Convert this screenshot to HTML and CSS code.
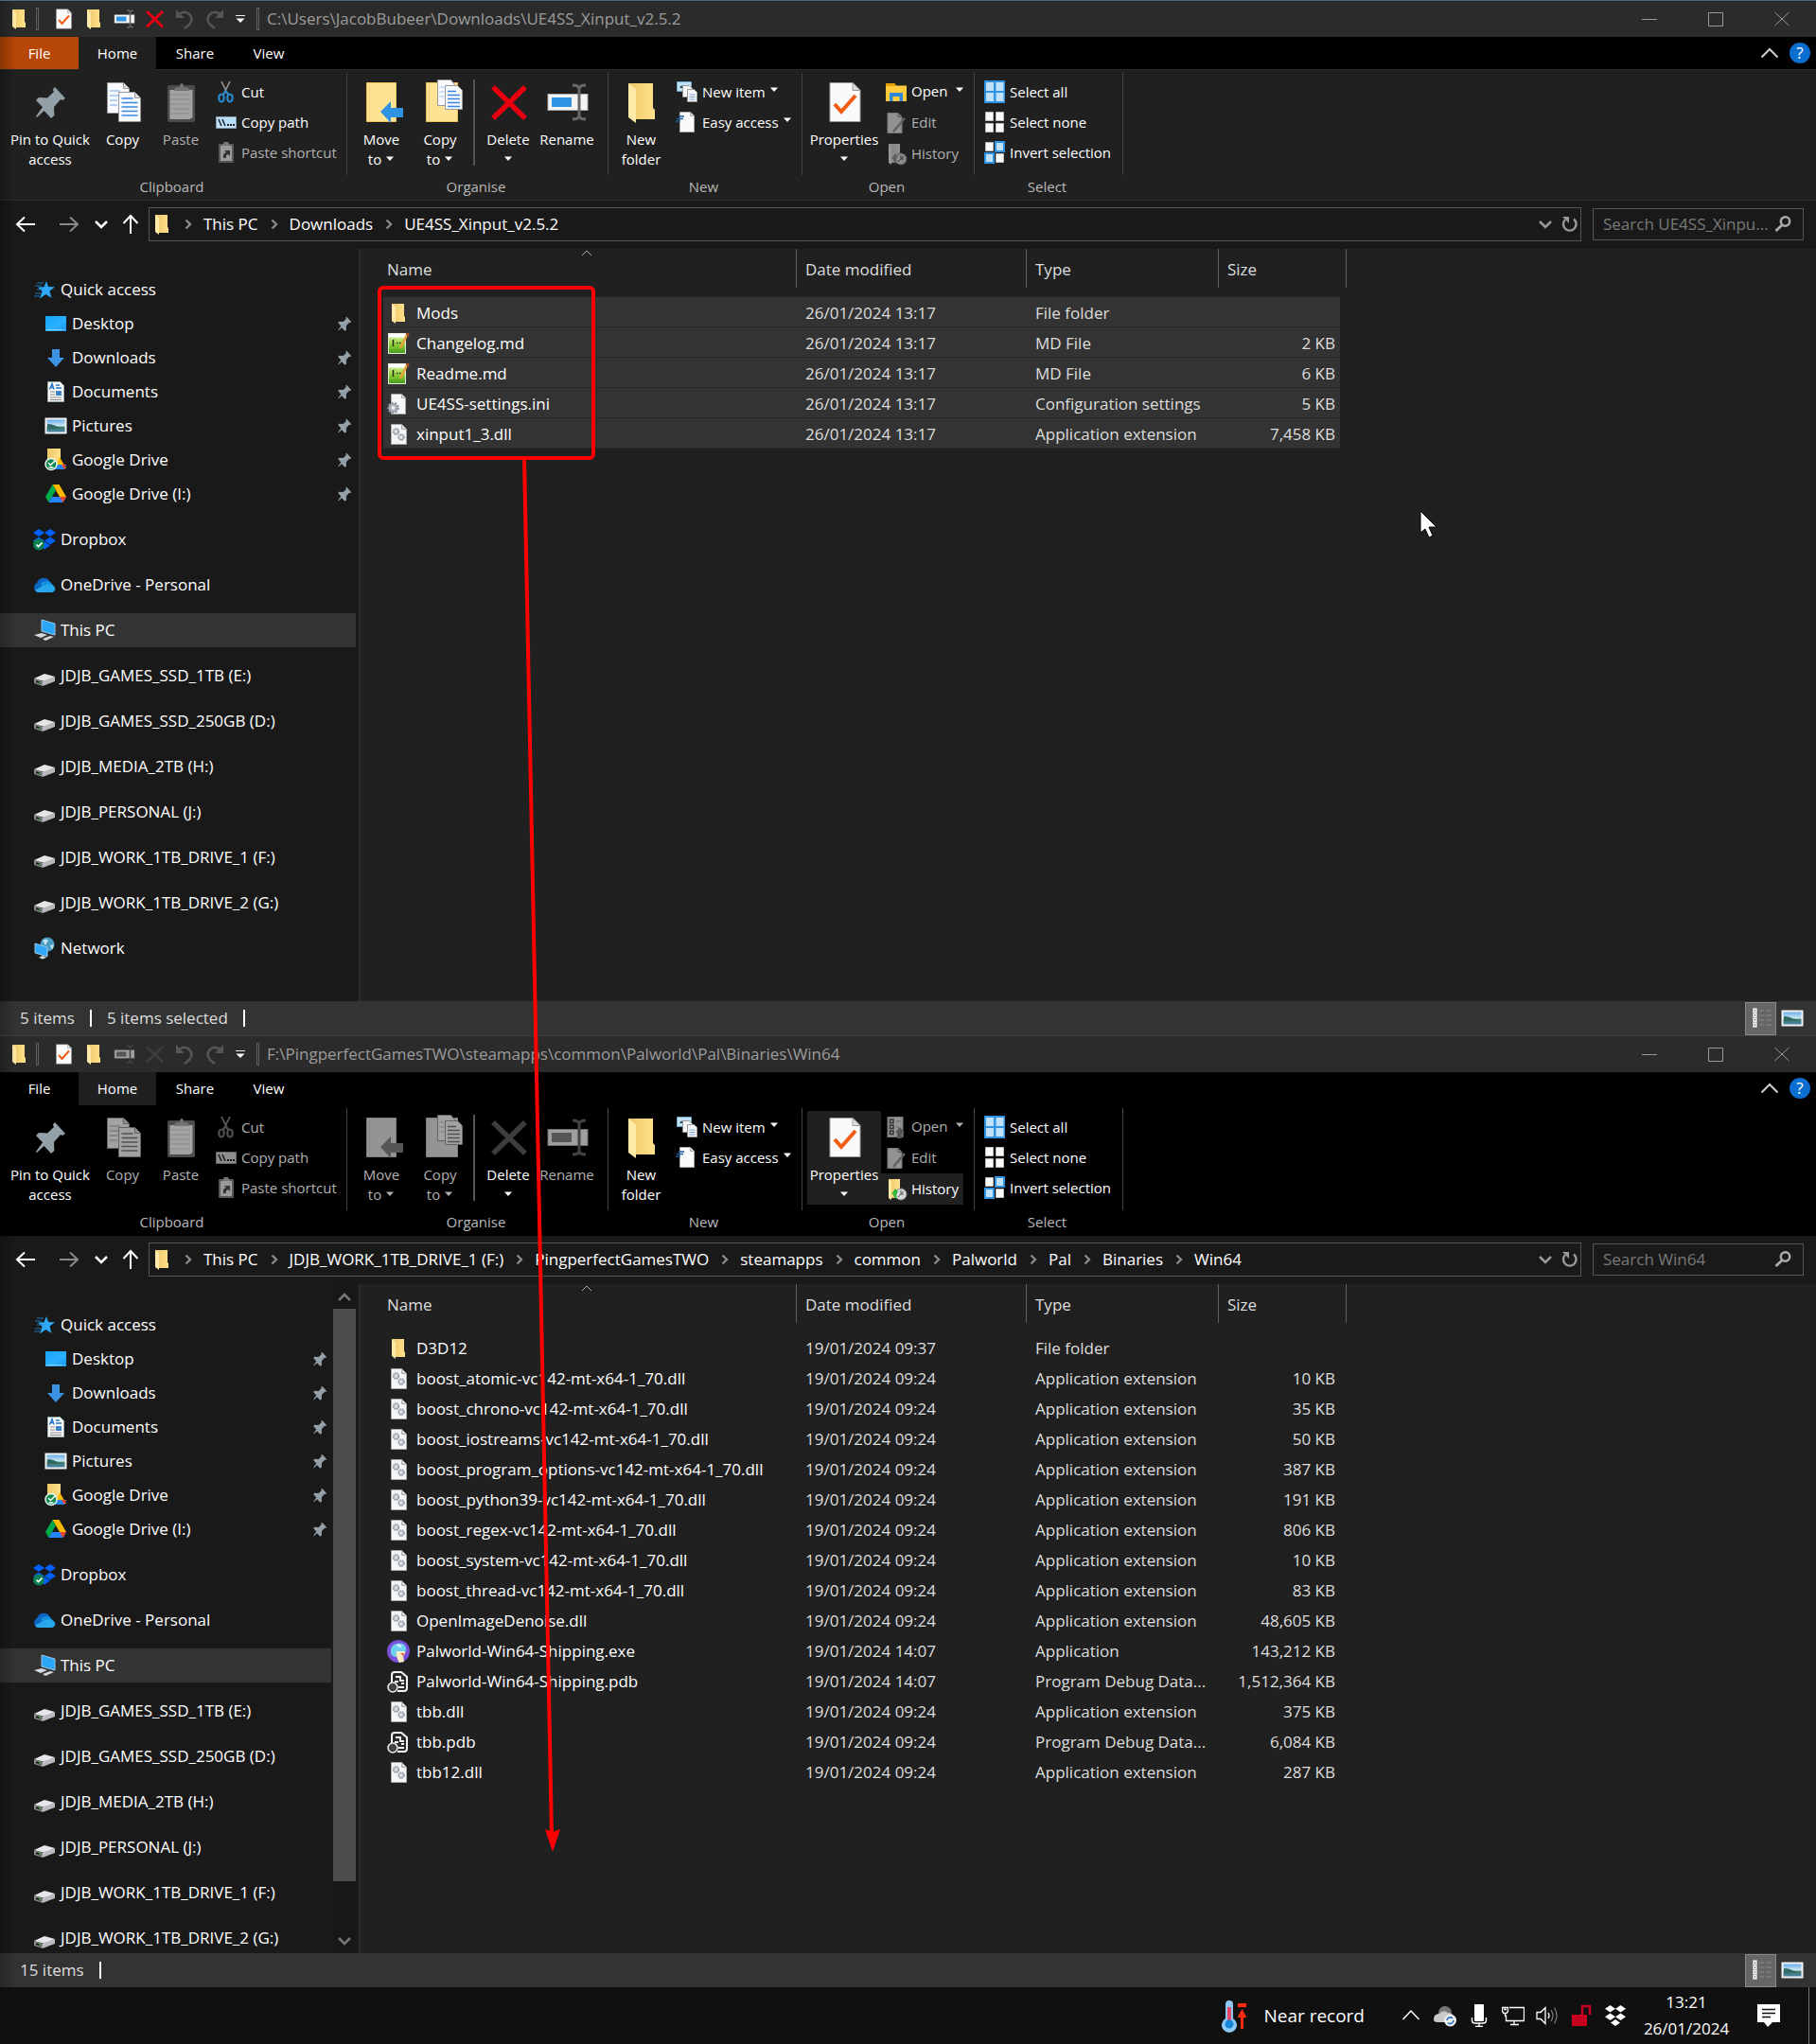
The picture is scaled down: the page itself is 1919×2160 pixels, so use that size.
FILE: index.html
```html
<!DOCTYPE html>
<html lang="en-GB">
<head>
<meta charset="utf-8">
<title>File Explorer</title>
<link rel="stylesheet" href="styles.css">
</head>
<body>
<svg class="sprite" aria-hidden="true">
  <defs>
    <linearGradient id="gFolder" x1="0" y1="0" x2="1" y2="0"><stop offset="0" stop-color="#edc866"/><stop offset="1" stop-color="#ffe08c"/></linearGradient>
    <linearGradient id="gSky" x1="0" y1="0" x2="0" y2="1"><stop offset="0" stop-color="#5aa5e6"/><stop offset=".5" stop-color="#cfe6f5"/><stop offset=".6" stop-color="#3f7a6a"/><stop offset="1" stop-color="#4a86b8"/></linearGradient>
    <linearGradient id="gBlue" x1="0" y1="0" x2="1" y2="1"><stop offset="0" stop-color="#14a5ff"/><stop offset=".6" stop-color="#2cb0ff"/><stop offset="1" stop-color="#1490ea"/></linearGradient>
    <linearGradient id="gGreen" x1="0" y1="0" x2="0" y2="1"><stop offset="0" stop-color="#e9f6c8"/><stop offset=".5" stop-color="#9bd63c"/><stop offset="1" stop-color="#3f9a1a"/></linearGradient>
  </defs>
  <symbol id="folder" viewBox="0 0 24 24"><path d="M5 2h13v13l1 1v5H8z" fill="url(#gFolder)"/><path d="M5 2l4 3v18l-4-3z" fill="#ffe9a6"/></symbol>
  <symbol id="props" viewBox="0 0 48 48"><path d="M9 3.500h24l8 8v33H9z" fill="#fafafa" stroke="#9a9a9a"/><path d="M33 3.500v8h8z" fill="#ddd" stroke="#9a9a9a"/><path d="M14 26l7 8 15-17" fill="none" stroke="#f25c12" stroke-width="4"/></symbol>
  <symbol id="rename" viewBox="0 0 48 48"><rect x="4" y="15.500" width="42" height="17" fill="#f4f4f4" stroke="#aaa"/><rect x="8" y="19" width="21" height="10" fill="#2f93e4"/><path d="M30 6q7 0 7 4v28q0 4-7 4M44 6q-7 0-7 4M44 42q-7 0-7-4" fill="none" stroke="#666" stroke-width="3"/></symbol>
  <symbol id="cross" viewBox="0 0 48 48"><path d="M8 8l34 33M42 8L8 41" stroke="#e8000e" stroke-width="5.500"/></symbol>
  <symbol id="undo" viewBox="0 0 24 24"><path d="M5 8q7-6 12-1t0 11l-5 4" fill="none" stroke="#555" stroke-width="2.500"/><path d="M3 2v9h9z" fill="#555"/></symbol>
  <symbol id="redo" viewBox="0 0 24 24"><path d="M19 8q-7-6-12-1t0 11l5 4" fill="none" stroke="#555" stroke-width="2.500"/><path d="M21 2v9h-9z" fill="#555"/></symbol>
  <symbol id="more" viewBox="0 0 12 12"><path d="M1 2.500h10" stroke="#eee"/><path d="M1.500 5.500h9L6 10z" fill="#fff"/></symbol>
  <symbol id="pin" viewBox="0 0 24 24"><path d="M14.500 4l5.500 6-1.500 1-1-.5-3.500 4 .2 4.500-1.700 1.500-3.700-4L5 20l-.6-.4 3.600-5L4.500 11 6 9.500l4.500.3L14 6.500l-.6-1.200z" fill="#94a0a8"/></symbol>
  <symbol id="copy" viewBox="0 0 48 48"><g stroke="#999" fill="#f8f9fc"><path d="M7.500 3.500h17l6 6v26h-23z"/><path d="M24.500 3.500v6h6" fill="#ddd"/></g><path d="M10 12h11M10 17h11M10 22h8M10 27h8" stroke="#9dc3ee" stroke-width="1.500"/><g stroke="#999" fill="#f8f9fc"><path d="M19.500 13.500h17l6 6v25h-23z"/><path d="M36.500 13.500v6h6" fill="#ddd"/></g><path d="M22.500 20h12M22.500 24.500h17M22.500 29h17M22.500 33.500h17M22.500 38h17" stroke="#3b86e0" stroke-width="1.500"/></symbol>
  <symbol id="paste" viewBox="0 0 48 48"><rect x="10" y="6" width="29" height="39" rx="2" fill="#4c4c4e"/><path d="M12.500 11h24v29l-3 2h-21z" fill="#a3a3a5"/><path d="M17 12q0-4 4-4h2q0-4 2-4t2 4h2q4 0 4 4z" fill="#737375"/><path d="M14 16h20M14 21h20M14 26h20M14 31h20M14 36h18" stroke="#858588"/></symbol>
  <symbol id="cut" viewBox="0 0 24 24"><path d="M7 1l7 14M16 1L9 15" stroke="#9a9a9a" stroke-width="1.600"/><g fill="none" stroke="#2b8bd0" stroke-width="2.200"><ellipse cx="7" cy="18.500" rx="2.700" ry="4"/><ellipse cx="16" cy="18.500" rx="2.700" ry="4"/><path d="M8.500 15l3-3.500 3 3.500"/></g></symbol>
  <symbol id="path" viewBox="0 0 24 24"><rect x="1.500" y="6.500" width="21" height="12" fill="#b9dffb" stroke="#8d9aa5"/><path d="M4 9l3 7M8 9l3 7" stroke="#222" stroke-width="1.500"/><path d="M13 15h2M16 15h2M19 15h2" stroke="#222" stroke-width="2"/></symbol>
  <symbol id="shortcut" viewBox="0 0 24 24"><rect x="4" y="3" width="16" height="20" rx="1" fill="#58585a"/><rect x="6" y="5" width="12" height="16" fill="#9a9a9c"/><path d="M8 5l2-4h4l2 4z" fill="#777"/><path d="M9 18q-1-5 3-6l-2-2h6v6l-2-2q-3 1-2 4z" fill="#333"/></symbol>
  <symbol id="moveto" viewBox="0 0 48 48"><path d="M8.500 3.500h31v41h-31z" fill="#ffe394" stroke="#e8c15a"/><path d="M11.500 6v37" stroke="#f0cd6e"/><path d="M23 34l11-11v7h13v10H34v6z" fill="#2f93e4"/></symbol>
  <symbol id="copyto" viewBox="0 0 48 48"><path d="M9.500 3.500h33v41h-33z" fill="#ffe394" stroke="#e8c15a"/><path d="M12.500 6v37" stroke="#f0cd6e"/><g stroke="#999" fill="#f8f9fc"><path d="M21.500.5h14l4 5v22h-18z"/><path d="M29.500 6.500h13l5 5v20h-18z"/></g><path d="M23.500 8h5M23.500 13h5M23.500 18h5" stroke="#9dc3ee"/><path d="M32 12.500h9M32 16.500h13M32 20.500h13M32 24.500h13M32 28.500h13" stroke="#3b86e0" stroke-width="1.500"/></symbol>
  <symbol id="newitem" viewBox="0 0 24 24"><path d="M1.500 1.500h15v10h-15z" fill="#bfe2f6" stroke="#6fa7c9"/><path d="M4 8q2-5 5 0z" fill="#345"/><g fill="#f6f6f8" stroke="#999"><path d="M7.500 5.500h7l3 3v9h-10z"/><path d="M12.500 9.500h7l3 3v10h-10z"/></g><path d="M14.500 15h6M14.500 17.500h6M14.500 20h6" stroke="#7b9fd8"/></symbol>
  <symbol id="easy" viewBox="0 0 24 24"><path d="M4.500 1.500h11l4 4v17h-15z" fill="#fafafa" stroke="#aaa"/><path d="M15.500 1.500v4h4" fill="#ddd" stroke="#aaa"/><path d="M3 6h6M1 8.500h7M0 11h5" stroke="#1c5c93" stroke-width="1.400"/></symbol>
  <symbol id="open" viewBox="0 0 24 24"><path d="M1 3h9l2 2.500h11V22H1z" fill="#ffcb3d"/><path d="M1 3h10v3H1z" fill="#e39c0a"/><path d="M5 22v-9h14v9h-3.500v-5h-7v5z" fill="#2f87dd"/></symbol>
  <symbol id="openfile" viewBox="0 0 24 24"><rect x="3" y="1.500" width="16" height="21" fill="#929292" stroke="#777"/><g fill="#999" stroke="#333" stroke-width="1.500"><rect x="5.500" y="4" width="3.500" height="3.500"/><rect x="5.500" y="10" width="3.500" height="3.500"/><rect x="5.500" y="16" width="3.500" height="3.500"/></g><path d="M12 6h5M12 12h3" stroke="#666"/><path d="M16 12l5 6h-3v6h-5v-6h-2z" fill="#555"/></symbol>
  <symbol id="edit" viewBox="0 0 24 24"><path d="M3 1.500h11l4 4v17H3z" fill="#929292" stroke="#777"/><path d="M14 1.500v4h4" fill="none" stroke="#555"/><path d="M21 7L9 21" stroke="#606060" stroke-width="2.500"/></symbol>
  <symbol id="history" viewBox="0 0 24 24"><path d="M4 1h12v20H4z" fill="url(#gFolder)"/><path d="M4 1l3 2v20l-3-2z" fill="#ffe9a6"/><circle cx="17" cy="17" r="6" fill="#d8d8d8" stroke="#888"/><path d="M17 13v4h3M14 20l6-6" stroke="#555" fill="none"/><path d="M7 17l4-6 3 3q-3 3-1 8-4-1-4-5z" fill="#2fb83a"/></symbol>
  <symbol id="selall" viewBox="0 0 24 24"><path d="M1 0h22v24H1z" fill="#2f93e4"/><path d="M3 2h8v9H3zM13.500 2h8v9h-8zM3 13h8v9H3zM13.500 13h8v9h-8z" fill="#bfe1fb"/></symbol>
  <symbol id="selnone" viewBox="0 0 24 24"><path d="M2.500 1.500h8v9h-8zM13.500 1.500h8v9h-8zM2.500 13.500h8v9h-8zM13.500 13.500h8v9h-8z" fill="#fafafa" stroke="#bbb"/></symbol>
  <symbol id="selinv" viewBox="0 0 24 24"><path d="M2.500 1.500h8v9h-8zM13.500 13.500h8v9h-8z" fill="#fafafa" stroke="#bbb"/><path d="M13 1h9v10h-9zM2 13h9v10H2z" fill="#bfe1fb" stroke="#2f93e4" stroke-width="2"/></symbol>
  <symbol id="caret" viewBox="0 0 10 6"><path d="M1 .5h8L5 5z" fill="currentColor"/></symbol>
  <symbol id="min" viewBox="0 0 16 16"><path d="M0 8.500h16" stroke="#999"/></symbol>
  <symbol id="max" viewBox="0 0 16 16"><path d="M.5 1.500h15v14H.5z" fill="none" stroke="#999"/></symbol>
  <symbol id="close" viewBox="0 0 16 16"><path d="M.5 1l15 14M15.500 1L.5 15" stroke="#999"/></symbol>
  <symbol id="up-thin" viewBox="0 0 20 12"><path d="M1.500 10.500L10 2l8.500 8.500" fill="none" stroke="currentColor" stroke-width="2"/></symbol>
  <symbol id="sort" viewBox="0 0 12 8"><path d="M1 7l5-5 5 5" fill="none" stroke="#aaa"/></symbol>
  <symbol id="left" viewBox="0 0 24 24"><path d="M12 4.500L4 12l8 7.500M4 12h19" fill="none" stroke="currentColor" stroke-width="2"/></symbol>
  <symbol id="right" viewBox="0 0 24 24"><path d="M12 4.500l8 7.500-8 7.500M20 12H1" fill="none" stroke="currentColor" stroke-width="2"/></symbol>
  <symbol id="up" viewBox="0 0 24 24"><path d="M4.500 11L12 3l7.500 8M12 3v19" fill="none" stroke="currentColor" stroke-width="2"/></symbol>
  <symbol id="down" viewBox="0 0 16 12"><path d="M2 3l6 6 6-6" fill="none" stroke="currentColor" stroke-width="2.500"/></symbol>
  <symbol id="chev" viewBox="0 0 12 12"><path d="M3.500 1.500L8 6l-4.500 4.500" fill="none" stroke="#8a8a8a" stroke-width="2.400"/></symbol>
  <symbol id="refresh" viewBox="0 0 20 20"><path d="M14 4.500a6.800 6.800 0 1 1-9 .5" fill="none" stroke="#999" stroke-width="2.400"/><path d="M2 2h7v7z" fill="#999"/></symbol>
  <symbol id="search" viewBox="0 0 20 20"><circle cx="12.500" cy="7" r="4.700" fill="none" stroke="#aaa" stroke-width="2.500"/><path d="M9.500 10.500L2.500 17" stroke="#aaa" stroke-width="3"/></symbol>
  <symbol id="star" viewBox="0 0 24 24"><path d="M14 3l2 6 7 .3-5.500 4.200 2 7.500L13.500 17 7 21.500l2.500-7.500L5 9.500l6.500-.3z" fill="#2ea8f5"/><path d="M4 5h7M2 8h7M4 12h6M2 16h6M1 19h6" stroke="#1b78bd" stroke-width="1.200"/></symbol>
  <symbol id="desktop" viewBox="0 0 24 24"><rect x="1" y="4" width="22" height="16" fill="url(#gBlue)"/><path d="M2 18.500h17M20 18.500h2" stroke="#7fd0ff"/></symbol>
  <symbol id="downloads" viewBox="0 0 24 24"><path d="M8 3h8v9h5l-9 10-9-10h5z" fill="#3c93e3"/></symbol>
  <symbol id="documents" viewBox="0 0 24 24"><path d="M3.500 1.500h13l4 4v17h-17z" fill="#fafafa" stroke="#9aa"/><path d="M5.500 9.500l2.500-6 2 6M6.500 7.500h3M12 5h4M12 8h6" stroke="#2176c7" stroke-width="1.400" fill="none"/><path d="M12 11h6v5h-6z" fill="#3c84c4"/><path d="M6 12h5M6 15h5M6 18h12M6 20.500h12" stroke="#888"/></symbol>
  <symbol id="pictures" viewBox="0 0 24 24"><rect x="1.500" y="4.500" width="21" height="15" fill="url(#gSky)" stroke="#f2f2f2" stroke-width="2"/><path d="M3 10q7 0 14 5H3z" fill="#2f6b62"/></symbol>
  <symbol id="drive-tri" viewBox="0 0 24 24"><path d="M8.500 2h7l7.500 13h-7z" fill="#ffba00"/><path d="M8.500 2L12 8 4.500 21 1 15z" fill="#00a94b"/><path d="M4.500 21L8 15h15l-3.500 6z" fill="#2684fc"/><path d="M16 15h7l-3.500 6z" fill="#ea4335"/></symbol>
  <symbol id="gdrive" viewBox="0 0 24 24"><path d="M3 0h14v15H3z" fill="url(#gFolder)"/><path d="M16 9l7 12H11z" fill="#ffba00"/><path d="M12 17h11l-2 5H11z" fill="#2684fc"/><path d="M18 17h5l-2 5z" fill="#ea4335"/><circle cx="7" cy="16.500" r="6" fill="#0f8a4d" stroke="#e8f5ee" stroke-width="1.500"/><path d="M4 15l2.500 2.500L11 13M4.500 20h5" fill="none" stroke="#fff" stroke-width="1.500"/></symbol>
  <symbol id="dropbox" viewBox="0 0 24 24"><path d="M6 1l6 4-6 4-6-4zM18 1l6 4-6 4-6-4zM6 9.500l6 4-6 4-6-4zM18 9.500l6 4-6 4-6-4zM12 14.500l6 4-6 4-6-4z" fill="#0061ff"/><circle cx="6" cy="17.500" r="6" fill="#0c8050"/><path d="M3.500 17.500l2 2 4-4" fill="none" stroke="#fff" stroke-width="1.600"/></symbol>
  <symbol id="onedrive" viewBox="0 0 24 24"><path d="M3.500 19a5 5 0 0 1 .5-9 7.500 7.500 0 0 1 14-1L12 18z" fill="#0a64c0"/><path d="M8 10q7-4 11 0l3 4-12 5z" fill="#1490df"/><path d="M2 17.500L11 13q8-4 11.500 1 2.500 4-2.500 6H5q-2 0-3-2.500z" fill="#28a8ea"/></symbol>
  <symbol id="pc" viewBox="0 0 24 24"><path d="M9 1l14 4v12L9 13z" fill="#2aa6f7" stroke="#9cc8e2"/><path d="M1 17l8-2 6 2-7 3zM10 21l8-3 4 1-9 4z" fill="#d5dade"/></symbol>
  <symbol id="disk" viewBox="0 0 24 24"><path d="M1 15l11-5 11 3-11 5z" fill="#e6e6e8"/><path d="M1 15l9 3v5l-9-3z" fill="#8b8b8e"/><path d="M10 18l13-5v5l-13 5z" fill="#b9b9bd"/><path d="M3 18l5 2" stroke="#222" stroke-width="2"/><path d="M6 19.500h1.500" stroke="#4c4" stroke-width="1.200"/></symbol>
  <symbol id="network" viewBox="0 0 24 24"><circle cx="15" cy="8" r="7.500" fill="#4c9bc4"/><path d="M10 4q4-3 6 0l-3 5zM18 9l4-1-2 6z" fill="#c2e2ef"/><path d="M2 7l13 4v10L2 17z" fill="#31a9f8" stroke="#9cc8e2"/><path d="M6 22l4-2 4 2-4 1.500z" fill="#ddd"/></symbol>
  <symbol id="md" viewBox="0 0 24 24"><rect x="1.500" y="1.500" width="18" height="21" fill="url(#gGreen)" stroke="#e6ecdc"/><path d="M2 3.500h17" stroke="#fff" stroke-width="4"/><path d="M6.500 8v7M10 11.500h1.500M13 11.500h1.500" stroke="#222" stroke-width="1.500"/><path d="M21.500 2L14 17" stroke="#e9a13c" stroke-width="2.500"/><path d="M22.500 1l-1 3" stroke="#b34b2a" stroke-width="2.500"/></symbol>
  <symbol id="ini" viewBox="0 0 24 24"><path d="M4.500 1.500h11l4 4v17h-15z" fill="#f5f6f8" stroke="#aaa"/><path d="M15.500 1.500v4h4" fill="#ddd" stroke="#aaa"/><circle cx="6.500" cy="16" r="5" fill="#aab2ba" stroke="#8d969e" stroke-width="2.500" stroke-dasharray="2 1.500"/><circle cx="6.500" cy="16" r="2" fill="#eee"/></symbol>
  <symbol id="dll" viewBox="0 0 24 24"><path d="M4.500 1.500h11l5 5v16h-16z" fill="#f5f6f8" stroke="#aaa"/><path d="M15.500 1.500v5h5" fill="#ddd" stroke="#aaa"/><g fill="#dfe3e6" stroke="#8b949c" stroke-width="1.800" stroke-dasharray="1.700 .6"><circle cx="9.500" cy="9" r="2.800"/><circle cx="15" cy="15" r="2.800"/></g></symbol>
  <symbol id="exe" viewBox="0 0 24 24"><circle cx="12" cy="12" r="12" fill="#7a50d8"/><path d="M4 15q-1-9 5-11 9-2 11 4v4h-8l-2 6q-4 0-6-3z" fill="#6fd0ee"/><path d="M10 12h9q1 3-2 5l1 6-5 1q-4-6-3-12z" fill="#f9ecc0"/><path d="M14 14h5l-2 3z" fill="#e06a5a"/><path d="M11 5l4 2" stroke="#c8f2ff" stroke-width="3"/></symbol>
  <symbol id="pdb" viewBox="0 0 24 24"><path d="M5 13V5q0-3 3-3h7l6 5v12q0 3-3 3h-7" fill="#2a2a2a" stroke="#f4f4f4" stroke-width="2"/><path d="M9 7h5v4h4M8 12h4M15 14h3M12 18h6" stroke="#f4f4f4" stroke-width="1.800" fill="none"/><circle cx="6" cy="18" r="5" fill="#444" stroke="#eee" stroke-width="1.500"/></symbol>
  <symbol id="details" viewBox="0 0 24 24"><path d="M3.500 1.500h4v5h-4zM3.500 6.500h4v5h-4zM3.500 11.500h4v5h-4zM3.500 16.500h4v5h-4z" fill="#fff" stroke="#bbb"/><path d="M5 4h1M5 9h1M5 14h1M5 19h1" stroke="#446" stroke-width="1.500"/><path d="M10 4h5M17 4h6M10 9h5M17 9h6M10 14h5M17 14h6M10 19h5M17 19h6" stroke="#8a8a8a"/></symbol>
</svg>

<main class="desk">
  <section class="window" aria-label="UE4SS_Xinput_v2.5.2">
    <header class="titlebar">
      <svg class="ic"><use href="#folder"/></svg><span class="bar"></span>
      <div class="qat">
        <button aria-label="Properties"><svg class="ic"><use href="#props"/></svg></button>
        <button aria-label="New folder"><svg class="ic"><use href="#folder"/></svg></button>
        <button aria-label="Rename"><svg class="ic"><use href="#rename"/></svg></button>
        <button aria-label="Delete"><svg class="ic"><use href="#cross"/></svg></button>
        <button aria-label="Undo"><svg class="ic"><use href="#undo"/></svg></button>
        <button aria-label="Redo"><svg class="ic"><use href="#redo"/></svg></button>
        <button class="more" aria-label="Customise"><svg class="ic"><use href="#more"/></svg></button>
      </div>
      <span class="bar"></span>
      <h1>C:\Users\JacobBubeer\Downloads\UE4SS_Xinput_v2.5.2</h1>
      <div class="controls"><button aria-label="Minimise"><svg><use href="#min"/></svg></button><button aria-label="Maximise"><svg><use href="#max"/></svg></button><button aria-label="Close"><svg><use href="#close"/></svg></button></div>
    </header>
    <nav class="tabs">
      <button class="tab file">File</button><button class="tab current">Home</button><button class="tab">Share</button><button class="tab view">View</button>
      <div class="help"><button aria-label="Collapse ribbon"><svg class="collapse"><use href="#up-thin"/></svg></button><button class="round" aria-label="Help">?</button></div>
    </nav>
    <div class="ribbon">
      <div class="group clipboard">
        <div class="tools">
          <button class="big pinbtn"><svg><use href="#pin"/></svg><span>Pin to Quick<br>access</span></button>
          <button class="big copybtn"><svg><use href="#copy"/></svg><span>Copy</span></button>
          <button class="big off pastebtn"><svg><use href="#paste"/></svg><span>Paste</span></button>
          <div class="stack">
            <button class="small"><svg class="ic"><use href="#cut"/></svg>Cut</button>
            <button class="small"><svg class="ic"><use href="#path"/></svg>Copy path</button>
            <button class="small off"><svg class="ic"><use href="#shortcut"/></svg>Paste shortcut</button>
          </div>
        </div>
        <div class="caption">Clipboard</div>
      </div>
      <div class="group organise">
        <div class="tools">
          <button class="big"><svg><use href="#moveto"/></svg><span>Move<br>to <svg class="caret"><use href="#caret"/></svg></span></button>
          <button class="big"><svg><use href="#copyto"/></svg><span>Copy<br>to <svg class="caret"><use href="#caret"/></svg></span></button>
          <span class="rule"></span>
          <button class="big"><svg><use href="#cross"/></svg><span>Delete<br><svg class="caret"><use href="#caret"/></svg></span></button>
          <button class="big"><svg><use href="#rename"/></svg><span>Rename</span></button>
        </div>
        <div class="caption">Organise</div>
      </div>
      <div class="group new">
        <div class="tools">
          <button class="big"><svg><use href="#folder"/></svg><span>New<br>folder</span></button>
          <div class="stack">
            <button class="small"><svg class="ic"><use href="#newitem"/></svg>New item<svg class="caret"><use href="#caret"/></svg></button>
            <button class="small"><svg class="ic"><use href="#easy"/></svg>Easy access<svg class="caret"><use href="#caret"/></svg></button>
          </div>
        </div>
        <div class="caption">New</div>
      </div>
      <div class="group opening">
        <div class="tools">
          <button class="big"><svg><use href="#props"/></svg><span>Properties<br><svg class="caret"><use href="#caret"/></svg></span></button>
          <div class="stack">
            <button class="small"><svg class="ic"><use href="#open"/></svg>Open<svg class="caret wide"><use href="#caret"/></svg></button>
            <button class="small off"><svg class="ic"><use href="#edit"/></svg>Edit</button>
            <button class="small off"><svg class="ic gray"><use href="#history"/></svg>History</button>
          </div>
        </div>
        <div class="caption">Open</div>
      </div>
      <div class="group select">
        <div class="tools">
          <div class="stack">
            <button class="small"><svg class="ic"><use href="#selall"/></svg>Select all</button>
            <button class="small"><svg class="ic"><use href="#selnone"/></svg>Select none</button>
            <button class="small"><svg class="ic"><use href="#selinv"/></svg>Invert selection</button>
          </div>
        </div>
        <div class="caption">Select</div>
      </div>
    </div>
    <div class="address">
      <div class="moves">
        <button aria-label="Back"><svg class="ic"><use href="#left"/></svg></button><button class="dim" aria-label="Forward"><svg class="ic"><use href="#right"/></svg></button><button class="recent" aria-label="Recent"><svg><use href="#down"/></svg></button><button class="upbtn" aria-label="Up"><svg class="ic"><use href="#up"/></svg></button>
      </div>
      <div class="crumbs">
        <svg class="ic"><use href="#folder"/></svg><svg class="chev first"><use href="#chev"/></svg>
        <a href="#">This PC</a><svg class="chev"><use href="#chev"/></svg><a href="#">Downloads</a><svg class="chev"><use href="#chev"/></svg><a href="#">UE4SS_Xinput_v2.5.2</a>
        <div class="ends"><button aria-label="Previous locations"><svg class="drop"><use href="#down"/></svg></button><button aria-label="Refresh"><svg class="refresh"><use href="#refresh"/></svg></button></div>
      </div>
      <label class="search"><input type="text" aria-label="Search" placeholder="Search UE4SS_Xinpu..."><svg class="refresh"><use href="#search"/></svg></label>
    </div>
    <div class="content">
      <aside class="side">
        <ul class="tree">
          <li><a href="#"><svg class="ic"><use href="#star"/></svg>Quick access</a>
            <ul>
              <li><a href="#"><svg class="ic"><use href="#desktop"/></svg>Desktop<svg class="tack"><use href="#pin"/></svg></a></li>
              <li><a href="#"><svg class="ic"><use href="#downloads"/></svg>Downloads<svg class="tack"><use href="#pin"/></svg></a></li>
              <li><a href="#"><svg class="ic"><use href="#documents"/></svg>Documents<svg class="tack"><use href="#pin"/></svg></a></li>
              <li><a href="#"><svg class="ic"><use href="#pictures"/></svg>Pictures<svg class="tack"><use href="#pin"/></svg></a></li>
              <li><a href="#"><svg class="ic"><use href="#gdrive"/></svg>Google Drive<svg class="tack"><use href="#pin"/></svg></a></li>
              <li><a href="#"><svg class="ic"><use href="#drive-tri"/></svg>Google Drive (I:)<svg class="tack"><use href="#pin"/></svg></a></li>
            </ul></li>
          <li><a href="#"><svg class="ic"><use href="#dropbox"/></svg>Dropbox</a></li>
          <li><a href="#"><svg class="ic"><use href="#onedrive"/></svg>OneDrive - Personal</a></li>
          <li><a href="#" class="here"><svg class="ic"><use href="#pc"/></svg>This PC</a></li>
          <li><a href="#"><svg class="ic"><use href="#disk"/></svg>JDJB_GAMES_SSD_1TB (E:)</a></li>
          <li><a href="#"><svg class="ic"><use href="#disk"/></svg>JDJB_GAMES_SSD_250GB (D:)</a></li>
          <li><a href="#"><svg class="ic"><use href="#disk"/></svg>JDJB_MEDIA_2TB (H:)</a></li>
          <li><a href="#"><svg class="ic"><use href="#disk"/></svg>JDJB_PERSONAL (J:)</a></li>
          <li><a href="#"><svg class="ic"><use href="#disk"/></svg>JDJB_WORK_1TB_DRIVE_1 (F:)</a></li>
          <li><a href="#"><svg class="ic"><use href="#disk"/></svg>JDJB_WORK_1TB_DRIVE_2 (G:)</a></li>
          <li><a href="#"><svg class="ic"><use href="#network"/></svg>Network</a></li>
        </ul>
      </aside>
      <div class="files">
        <table>
          <thead><tr><th class="c-name">Name<svg class="sort"><use href="#sort"/></svg></th><th class="c-date">Date modified</th><th class="c-type">Type</th><th class="c-size">Size</th><td class="c-end"></td></tr></thead>
          <tbody class="picked">
            <tr><td><span class="f"><svg class="ic"><use href="#folder"/></svg>Mods</span></td><td>26/01/2024 13:17</td><td>File folder</td><td></td></tr>
            <tr><td><span class="f"><svg class="ic"><use href="#md"/></svg>Changelog.md</span></td><td>26/01/2024 13:17</td><td>MD File</td><td>2 KB</td></tr>
            <tr><td><span class="f"><svg class="ic"><use href="#md"/></svg>Readme.md</span></td><td>26/01/2024 13:17</td><td>MD File</td><td>6 KB</td></tr>
            <tr><td><span class="f"><svg class="ic"><use href="#ini"/></svg>UE4SS-settings.ini</span></td><td>26/01/2024 13:17</td><td>Configuration settings</td><td>5 KB</td></tr>
            <tr><td><span class="f"><svg class="ic"><use href="#dll"/></svg>xinput1_3.dll</span></td><td>26/01/2024 13:17</td><td>Application extension</td><td>7,458 KB</td></tr>
          </tbody>
        </table>
      </div>
    </div>
    <footer class="status"><span>5 items</span><i></i><span>5 items selected</span><i></i>
      <div class="views"><button class="on" aria-label="Details"><svg class="ic"><use href="#details"/></svg></button><button aria-label="Large icons"><svg class="ic"><use href="#pictures"/></svg></button></div>
    </footer>
  </section>

  <section class="window inactive" aria-label="Win64">
    <header class="titlebar">
      <svg class="ic"><use href="#folder"/></svg><span class="bar"></span>
      <div class="qat">
        <button aria-label="Properties"><svg class="ic"><use href="#props"/></svg></button>
        <button aria-label="New folder"><svg class="ic"><use href="#folder"/></svg></button>
        <button aria-label="Rename"><svg class="ic gray"><use href="#rename"/></svg></button>
        <button aria-label="Delete"><svg class="ic faded"><use href="#cross"/></svg></button>
        <button aria-label="Undo"><svg class="ic"><use href="#undo"/></svg></button>
        <button aria-label="Redo"><svg class="ic"><use href="#redo"/></svg></button>
        <button class="more" aria-label="Customise"><svg class="ic"><use href="#more"/></svg></button>
      </div>
      <span class="bar"></span>
      <h1>F:\PingperfectGamesTWO\steamapps\common\Palworld\Pal\Binaries\Win64</h1>
      <div class="controls"><button aria-label="Minimise"><svg><use href="#min"/></svg></button><button aria-label="Maximise"><svg><use href="#max"/></svg></button><button aria-label="Close"><svg><use href="#close"/></svg></button></div>
    </header>
    <nav class="tabs">
      <button class="tab file">File</button><button class="tab current">Home</button><button class="tab">Share</button><button class="tab view">View</button>
      <div class="help"><button aria-label="Collapse ribbon"><svg class="collapse"><use href="#up-thin"/></svg></button><button class="round" aria-label="Help">?</button></div>
    </nav>
    <div class="ribbon">
      <div class="group clipboard">
        <div class="tools">
          <button class="big pinbtn"><svg><use href="#pin"/></svg><span>Pin to Quick<br>access</span></button>
          <button class="big off copybtn"><svg class="gray"><use href="#copy"/></svg><span>Copy</span></button>
          <button class="big off pastebtn"><svg><use href="#paste"/></svg><span>Paste</span></button>
          <div class="stack">
            <button class="small off"><svg class="ic gray"><use href="#cut"/></svg>Cut</button>
            <button class="small off"><svg class="ic gray"><use href="#path"/></svg>Copy path</button>
            <button class="small off"><svg class="ic"><use href="#shortcut"/></svg>Paste shortcut</button>
          </div>
        </div>
        <div class="caption">Clipboard</div>
      </div>
      <div class="group organise">
        <div class="tools">
          <button class="big off"><svg class="gray"><use href="#moveto"/></svg><span>Move<br>to <svg class="caret"><use href="#caret"/></svg></span></button>
          <button class="big off"><svg class="gray"><use href="#copyto"/></svg><span>Copy<br>to <svg class="caret"><use href="#caret"/></svg></span></button>
          <span class="rule"></span>
          <button class="big"><svg class="faded"><use href="#cross"/></svg><span>Delete<br><svg class="caret"><use href="#caret"/></svg></span></button>
          <button class="big off"><svg class="gray"><use href="#rename"/></svg><span>Rename</span></button>
        </div>
        <div class="caption">Organise</div>
      </div>
      <div class="group new">
        <div class="tools">
          <button class="big"><svg><use href="#folder"/></svg><span>New<br>folder</span></button>
          <div class="stack">
            <button class="small"><svg class="ic"><use href="#newitem"/></svg>New item<svg class="caret"><use href="#caret"/></svg></button>
            <button class="small"><svg class="ic"><use href="#easy"/></svg>Easy access<svg class="caret"><use href="#caret"/></svg></button>
          </div>
        </div>
        <div class="caption">New</div>
      </div>
      <div class="group opening">
        <div class="tools">
          <button class="big lit"><svg><use href="#props"/></svg><span>Properties<br><svg class="caret"><use href="#caret"/></svg></span></button>
          <div class="stack">
            <button class="small off"><svg class="ic"><use href="#openfile"/></svg>Open<svg class="caret wide"><use href="#caret"/></svg></button>
            <button class="small off"><svg class="ic"><use href="#edit"/></svg>Edit</button>
            <button class="small lit"><svg class="ic"><use href="#history"/></svg>History</button>
          </div>
        </div>
        <div class="caption">Open</div>
      </div>
      <div class="group select">
        <div class="tools">
          <div class="stack">
            <button class="small"><svg class="ic"><use href="#selall"/></svg>Select all</button>
            <button class="small"><svg class="ic"><use href="#selnone"/></svg>Select none</button>
            <button class="small"><svg class="ic"><use href="#selinv"/></svg>Invert selection</button>
          </div>
        </div>
        <div class="caption">Select</div>
      </div>
    </div>
    <div class="address">
      <div class="moves">
        <button aria-label="Back"><svg class="ic"><use href="#left"/></svg></button><button class="dim" aria-label="Forward"><svg class="ic"><use href="#right"/></svg></button><button class="recent" aria-label="Recent"><svg><use href="#down"/></svg></button><button class="upbtn" aria-label="Up"><svg class="ic"><use href="#up"/></svg></button>
      </div>
      <div class="crumbs">
        <svg class="ic"><use href="#folder"/></svg><svg class="chev first"><use href="#chev"/></svg>
        <a href="#">This PC</a><svg class="chev"><use href="#chev"/></svg><a href="#">JDJB_WORK_1TB_DRIVE_1 (F:)</a><svg class="chev"><use href="#chev"/></svg><a href="#">PingperfectGamesTWO</a><svg class="chev"><use href="#chev"/></svg><a href="#">steamapps</a><svg class="chev"><use href="#chev"/></svg><a href="#">common</a><svg class="chev"><use href="#chev"/></svg><a href="#">Palworld</a><svg class="chev"><use href="#chev"/></svg><a href="#">Pal</a><svg class="chev"><use href="#chev"/></svg><a href="#">Binaries</a><svg class="chev"><use href="#chev"/></svg><a href="#">Win64</a>
        <div class="ends"><button aria-label="Previous locations"><svg class="drop"><use href="#down"/></svg></button><button aria-label="Refresh"><svg class="refresh"><use href="#refresh"/></svg></button></div>
      </div>
      <label class="search"><input type="text" aria-label="Search" placeholder="Search Win64"><svg class="refresh"><use href="#search"/></svg></label>
    </div>
    <div class="content">
      <aside class="side">
        <ul class="tree">
          <li><a href="#"><svg class="ic"><use href="#star"/></svg>Quick access</a>
            <ul>
              <li><a href="#"><svg class="ic"><use href="#desktop"/></svg>Desktop<svg class="tack"><use href="#pin"/></svg></a></li>
              <li><a href="#"><svg class="ic"><use href="#downloads"/></svg>Downloads<svg class="tack"><use href="#pin"/></svg></a></li>
              <li><a href="#"><svg class="ic"><use href="#documents"/></svg>Documents<svg class="tack"><use href="#pin"/></svg></a></li>
              <li><a href="#"><svg class="ic"><use href="#pictures"/></svg>Pictures<svg class="tack"><use href="#pin"/></svg></a></li>
              <li><a href="#"><svg class="ic"><use href="#gdrive"/></svg>Google Drive<svg class="tack"><use href="#pin"/></svg></a></li>
              <li><a href="#"><svg class="ic"><use href="#drive-tri"/></svg>Google Drive (I:)<svg class="tack"><use href="#pin"/></svg></a></li>
            </ul></li>
          <li><a href="#"><svg class="ic"><use href="#dropbox"/></svg>Dropbox</a></li>
          <li><a href="#"><svg class="ic"><use href="#onedrive"/></svg>OneDrive - Personal</a></li>
          <li><a href="#" class="here"><svg class="ic"><use href="#pc"/></svg>This PC</a></li>
          <li><a href="#"><svg class="ic"><use href="#disk"/></svg>JDJB_GAMES_SSD_1TB (E:)</a></li>
          <li><a href="#"><svg class="ic"><use href="#disk"/></svg>JDJB_GAMES_SSD_250GB (D:)</a></li>
          <li><a href="#"><svg class="ic"><use href="#disk"/></svg>JDJB_MEDIA_2TB (H:)</a></li>
          <li><a href="#"><svg class="ic"><use href="#disk"/></svg>JDJB_PERSONAL (J:)</a></li>
          <li><a href="#"><svg class="ic"><use href="#disk"/></svg>JDJB_WORK_1TB_DRIVE_1 (F:)</a></li>
          <li><a href="#"><svg class="ic"><use href="#disk"/></svg>JDJB_WORK_1TB_DRIVE_2 (G:)</a></li>
        </ul>
        <div class="scroll"><svg class="arrow flip"><use href="#down"/></svg><div class="track"><div class="thumb"></div></div><svg class="arrow"><use href="#down"/></svg></div>
      </aside>
      <div class="files">
        <table>
          <thead><tr><th class="c-name">Name<svg class="sort"><use href="#sort"/></svg></th><th class="c-date">Date modified</th><th class="c-type">Type</th><th class="c-size">Size</th><td class="c-end"></td></tr></thead>
          <tbody>
            <tr><td><span class="f"><svg class="ic"><use href="#folder"/></svg>D3D12</span></td><td>19/01/2024 09:37</td><td>File folder</td><td></td></tr>
            <tr><td><span class="f"><svg class="ic"><use href="#dll"/></svg>boost_atomic-vc142-mt-x64-1_70.dll</span></td><td>19/01/2024 09:24</td><td>Application extension</td><td>10 KB</td></tr>
            <tr><td><span class="f"><svg class="ic"><use href="#dll"/></svg>boost_chrono-vc142-mt-x64-1_70.dll</span></td><td>19/01/2024 09:24</td><td>Application extension</td><td>35 KB</td></tr>
            <tr><td><span class="f"><svg class="ic"><use href="#dll"/></svg>boost_iostreams-vc142-mt-x64-1_70.dll</span></td><td>19/01/2024 09:24</td><td>Application extension</td><td>50 KB</td></tr>
            <tr><td><span class="f"><svg class="ic"><use href="#dll"/></svg>boost_program_options-vc142-mt-x64-1_70.dll</span></td><td>19/01/2024 09:24</td><td>Application extension</td><td>387 KB</td></tr>
            <tr><td><span class="f"><svg class="ic"><use href="#dll"/></svg>boost_python39-vc142-mt-x64-1_70.dll</span></td><td>19/01/2024 09:24</td><td>Application extension</td><td>191 KB</td></tr>
            <tr><td><span class="f"><svg class="ic"><use href="#dll"/></svg>boost_regex-vc142-mt-x64-1_70.dll</span></td><td>19/01/2024 09:24</td><td>Application extension</td><td>806 KB</td></tr>
            <tr><td><span class="f"><svg class="ic"><use href="#dll"/></svg>boost_system-vc142-mt-x64-1_70.dll</span></td><td>19/01/2024 09:24</td><td>Application extension</td><td>10 KB</td></tr>
            <tr><td><span class="f"><svg class="ic"><use href="#dll"/></svg>boost_thread-vc142-mt-x64-1_70.dll</span></td><td>19/01/2024 09:24</td><td>Application extension</td><td>83 KB</td></tr>
            <tr><td><span class="f"><svg class="ic"><use href="#dll"/></svg>OpenImageDenoise.dll</span></td><td>19/01/2024 09:24</td><td>Application extension</td><td>48,605 KB</td></tr>
            <tr><td><span class="f"><svg class="ic"><use href="#exe"/></svg>Palworld-Win64-Shipping.exe</span></td><td>19/01/2024 14:07</td><td>Application</td><td>143,212 KB</td></tr>
            <tr><td><span class="f"><svg class="ic"><use href="#pdb"/></svg>Palworld-Win64-Shipping.pdb</span></td><td>19/01/2024 14:07</td><td>Program Debug Data...</td><td>1,512,364 KB</td></tr>
            <tr><td><span class="f"><svg class="ic"><use href="#dll"/></svg>tbb.dll</span></td><td>19/01/2024 09:24</td><td>Application extension</td><td>375 KB</td></tr>
            <tr><td><span class="f"><svg class="ic"><use href="#pdb"/></svg>tbb.pdb</span></td><td>19/01/2024 09:24</td><td>Program Debug Data...</td><td>6,084 KB</td></tr>
            <tr><td><span class="f"><svg class="ic"><use href="#dll"/></svg>tbb12.dll</span></td><td>19/01/2024 09:24</td><td>Application extension</td><td>287 KB</td></tr>
          </tbody>
        </table>
      </div>
    </div>
    <footer class="status"><span>15 items</span><i></i>
      <div class="views"><button class="on" aria-label="Details"><svg class="ic"><use href="#details"/></svg></button><button aria-label="Large icons"><svg class="ic"><use href="#pictures"/></svg></button></div>
    </footer>
  </section>

  <footer class="taskbar">
    <button class="weather">
      <svg viewBox="0 0 28 36"><path d="M5 6a4 4 0 0 1 8 0v15a8 8 0 1 1-8 0z" fill="#8ec9f5"/><path d="M7 9h4v14H7z" fill="#e8486a"/><circle cx="9" cy="27" r="4.500" fill="#1487dc"/><path d="M18 5h9v4h-9z" fill="#ff2a12"/><path d="M22.500 11l5 9H24v12h-3V20h-3.500z" fill="#ff2a12"/></svg>
      Near record</button>
    <div class="tray">
      <button aria-label="Show hidden icons"><svg class="ic" viewBox="0 0 24 24"><path d="M3.500 16L12 7l8.500 9" fill="none" stroke="#fff" stroke-width="1.500"/></svg></button>
      <button aria-label="OneDrive"><svg class="ic" viewBox="0 0 24 24"><circle cx="12" cy="9" r="7" fill="#777"/><path d="M0 16q0-6 6-6 4-5 9-1 6 0 6 6-1 4-5 4H4q-4 0-4-3z" fill="#c9c9c9"/><circle cx="17.500" cy="17" r="6.500" fill="#eee"/><path d="M14 17a3.500 3.500 0 0 1 6-2M21 17a3.500 3.500 0 0 1-6 2.500" fill="none" stroke="#1b6ec0" stroke-width="1.600"/></svg></button>
      <button aria-label="Microphone"><svg class="ic" viewBox="0 0 24 24"><rect x="7" y="0" width="10" height="18" rx="1" fill="#fff"/><path d="M4.500 14v3q0 3 3 3h9q3 0 3-3v-3M12 20v3.500M8 23.500h8" fill="none" stroke="#fff" stroke-width="1.400"/></svg></button>
      <button aria-label="Network"><svg class="ic" viewBox="0 0 24 24"><path d="M8 3.500h15.500v14H4.500v-6M13 17.500V21M9 21.500h9M.5 3.500h6v4l-1.500 2h-3l-1.500-2zM2 5.500h3M3.500 9v4" fill="none" stroke="#fff" stroke-width="1.300"/></svg></button>
      <button aria-label="Volume"><svg class="ic" viewBox="0 0 24 24"><path d="M1 8.500h4l5-5v17l-5-5H1z" fill="none" stroke="#fff" stroke-width="1.300"/><path d="M13 9q2 3 0 6" fill="none" stroke="#fff" stroke-width="1.300"/><path d="M16 6q4 6 0 12M19.500 3.500q5 8.500 0 17" fill="none" stroke="#777" stroke-width="1.300"/></svg></button>
      <button aria-label="VPN"><svg class="ic" viewBox="0 0 24 24"><path d="M2 11h16v12H2z" fill="#c8001f"/><path d="M13 11V2h8v9" fill="none" stroke="#c8001f" stroke-width="2.400"/></svg></button>
      <button aria-label="Dropbox"><svg class="ic" viewBox="0 0 24 24"><path d="M6.500 1l5.500 3.700-5.500 3.700L1 4.700zM17.500 1L23 4.700l-5.500 3.700L12 4.700zM6.500 9.500l5.500 3.700L6.500 17 1 13.200zM17.500 9.500l5.500 3.700-5.500 3.800-5.500-3.800zM12 16l5 3.500-5 3.500-5-3.500z" fill="#fff"/></svg></button>
    </div>
    <time class="clock">13:21<br>26/01/2024</time>
    <button class="notes" aria-label="Notifications"><svg viewBox="0 0 24 24"><path d="M0 0h24v19h-8l-5 5-4-5H0z" fill="#fff"/><path d="M5 5.500h14M5 9.500h14M5 13.500h9" stroke="#111" stroke-width="1.500"/></svg></button>
  </footer>

  <svg class="markup" aria-hidden="true"><rect x="401" y="304" width="226" height="180" rx="4" fill="none" stroke="#f00" stroke-width="4"/><path d="M554 484L583 1940" stroke="#f00" stroke-width="4"/><path d="M576 1933l8 3 8-3-8 24z" fill="#f00"/><path d="M1501 540v23l5-4 4 9 4-2-4-9h8z" fill="#fff" stroke="#000"/></svg>
</main>
</body>
</html>
```
FILE: styles.css
```css
* { box-sizing: border-box; }
body {
  margin: 0;
  background: #101010;
  color: #fff;
  font: 17px/24px "Open Sans", "Noto Sans", sans-serif;
}
button {
  display: flex;
  align-items: center;
  justify-content: center;
  margin: 0;
  padding: 0;
  border: 0;
  background: none;
  color: inherit;
  font: inherit;
}
a { color: inherit; text-decoration: none; }
ul { margin: 0; padding: 0; list-style: none; }
svg { flex: none; display: block; }
.sprite { position: absolute; width: 0; height: 0; }
.ic { width: 24px; height: 24px; }
.gray { filter: grayscale(1) brightness(.65); }
.faded { filter: grayscale(1) brightness(1.2); }

.desk {
  position: relative;
  display: grid;
  grid-template-rows: minmax(0, 1094fr) minmax(0, 1006fr) 60px;
  height: 100vh;
  overflow: hidden;
}
.markup { position: absolute; inset: 0; width: 100%; height: 100%; pointer-events: none; }

.window {
  position: relative;
  display: flex;
  flex-direction: column;
  min-height: 0;
  border-top: 1px solid #4d6580;
  background: #191919;
}
.inactive { border-top-color: #3c3c3c; }
.window::after {
  content: "";
  position: absolute;
  inset: 0 auto 0 0;
  width: 16px;
  background: linear-gradient(to right, rgba(0, 0, 0, .25), transparent);
  pointer-events: none;
}

/* title bar */
.titlebar {
  display: flex;
  align-items: center;
  flex: none;
  height: 38px;
  padding-left: 8px;
  background: #2b2b2b;
  color: #9c9c9c;
}
.titlebar h1 { margin: 0 0 0 8px; font-size: 17px; font-weight: 400; white-space: nowrap; }
.bar { width: 3px; height: 24px; margin-left: 6px; border: 1px solid #606060; }
.qat { display: flex; margin-left: 10px; }
.qat button { width: 32px; height: 32px; }
.qat .more { width: 22px; }
.qat .more .ic { width: 12px; height: 12px; }
.controls { display: flex; margin-left: auto; padding-right: 1px; }
.controls button { width: 70px; height: 38px; }
.controls svg { width: 16px; height: 16px; }

/* tabs */
.tabs { display: flex; flex: none; height: 35px; background: #000; font-size: 15px; border-bottom: 1px solid #2b2b2b; }
.inactive .tabs { border-color: #000; }
.tab { width: 82px; height: 35px; padding-bottom: 2px; }
.tab.file { width: 83px; height: 34px; padding-bottom: 1px; background: #b74707; }
.inactive .tab.file { background: none; }
.tab.current { background: #202020; }
.tab.view { width: 74px; }
.help { display: flex; align-items: center; gap: 11px; margin-left: auto; padding-right: 6px; color: #ccc; }
.collapse { width: 20px; height: 12px; }
.help .round { width: 22px; height: 22px; border-radius: 50%; background: #0a6fd0; color: #fff; font-size: 17px; }

/* ribbon */
.ribbon { display: flex; flex: none; height: 138px; padding-bottom: 3px; background: #202020; border-bottom: 1px solid #2b2b2b; font-size: 15px; line-height: 21px; }
.inactive .ribbon { background: #000; border-color: #000; }
.group { position: relative; display: flex; flex-direction: column; padding-top: 6px; white-space: nowrap; }
.group::after { content: ""; position: absolute; right: 0; top: 3px; height: 108px; border-right: 1px solid #444; }
.clipboard { width: 367px; }
.organise { width: 276px; }
.new { width: 205px; }
.opening { width: 182px; }
.select { width: 157px; }
.tools { display: flex; height: 99px; }
.caption { margin-top: 8px; padding-right: 4px; text-align: center; color: #b8b8b8; }
.big { flex-direction: column; justify-content: flex-start; gap: 5px; padding-top: 4px; }
.big > svg { width: 48px; height: 48px; }
.big .caret { display: inline-block; margin-bottom: 3px; }
.caret { width: 10px; height: 6px; }
.off { color: #b0b0b0; }
.pinbtn { width: 98px; margin-left: 4px; }
.copybtn { width: 55px; }
.pastebtn { width: 68px; }
.organise .tools { padding-left: 5px; }
.organise .big { width: 62px; }
.rule { width: 2px; height: 91px; margin: 4px 4px 0; background: #555; }
.new .tools { padding-left: 2px; }
.new .big { width: 65px; }
.opening .tools { padding-left: 5px; }
.opening .big { width: 78px; }
.select .tools { padding-left: 5px; }
.stack { padding-top: 1px; }
.small { justify-content: flex-start; gap: 4px; height: 32px; padding: 0 4px; }
.small .caret { margin-bottom: 4px; }
.small .wide { margin-left: 4px; }
.clipboard .small { padding-left: 2px; }
.opening .stack { padding-top: 0; }
.opening .small { width: 87px; height: 33px; }
.lit { background: #202020; }

/* address row */
.address { display: flex; align-items: center; flex: none; height: 51px; padding: 0 13px 2px 0; }
.moves { display: flex; width: 157px; padding-left: 14px; }
.moves button { width: 24px; }
.moves .dim { margin-left: 24px; color: #8a8a8a; }
.moves .recent { margin-left: 13px; width: 16px; }
.moves .recent svg { width: 16px; height: 12px; }
.moves .upbtn { margin-left: 11px; }
.crumbs { display: flex; align-items: center; flex: 1; min-width: 0; height: 36px; padding-left: 1px; border: 1px solid #555; white-space: nowrap; }
.chev { width: 12px; height: 12px; margin: 0 10px 0 11px; }
.chev.first { margin-left: 10px; }
.ends { display: flex; gap: 8px; margin-left: auto; padding-right: 1px; color: #999; }
.drop { width: 16px; height: 12px; }
.refresh { width: 20px; height: 20px; }
.search { display: flex; align-items: center; width: 223px; height: 34px; margin-left: 12px; padding: 0 11px 0 10px; border: 1px solid #555; }
.search input { flex: 1; width: 100%; min-width: 0; padding: 0; border: 0; outline: 0; background: none; color: #fff; font: inherit; }
.search input::placeholder { color: #7a7a7a; opacity: 1; }

/* content */
.content { display: flex; flex: 1; min-height: 0; }
.side { display: flex; flex: none; width: 381px; padding-right: 3px; border-right: 2px solid #2b2b2b; overflow: hidden; }
.tree { flex: 1; padding-top: 25px; white-space: nowrap; }
.inactive .tree { margin-right: 2px; }
.tree > li + li { margin-top: 12px; }
.tree a { display: flex; align-items: center; gap: 5px; height: 36px; padding: 0 1px 0 35px; }
.tree ul a { padding-left: 47px; }
.tree .here { background: #333; }
.tack { width: 22px; height: 22px; margin-left: auto; }
.scroll { display: flex; flex-direction: column; align-items: center; width: 24px; padding: 8px 0 7px; background: #171717; color: #777; }
.track { flex: 1; width: 100%; margin: 6px 0 4px; }
.thumb { height: 92%; background: #4d4d4d; }
.arrow { width: 16px; height: 12px; }
.flip { transform: scaleY(-1); }
.files { flex: 1; min-width: 0; padding-left: 24px; background: #202020; }
table { border-spacing: 0; table-layout: fixed; width: 1018px; color: #dedede; white-space: nowrap; }
th { height: 41px; padding: 2px 0 0 9px; border-right: 1px solid #606060; text-align: left; font-weight: 400; }
.c-name { position: relative; width: 437px; padding-left: 4px; }
.c-date { width: 243px; }
.c-type { width: 203px; }
.c-size { width: 128px; border-right: 0; }
.c-end { width: 7px; border-right: 1px solid #606060; }
.sort { position: absolute; top: 0; left: 209px; width: 12px; height: 8px; }
tbody::before { content: ""; display: block; height: 10px; }
tbody td { height: 32px; padding: 2px 0 0 9px; border-bottom: 1px solid transparent; }
tbody td:first-child { padding-left: 4px; color: #fff; }
tbody td:last-child { padding: 2px 5px 0 0; text-align: right; }
.picked td { background: #333; border-color: #282828; }
.f { display: flex; align-items: center; gap: 7px; }

/* status bar */
.status { display: flex; align-items: center; gap: 16px; flex: none; height: 36px; padding-left: 21px; background: #333; color: #dedede; }
.status i { width: 2px; height: 18px; background: #fff; }
.views { display: flex; margin-left: auto; padding-right: 9px; }
.views button { width: 33px; height: 35px; }
.views .on { background: #666; border: 1px solid #8a8a8a; }

/* taskbar */
.taskbar { display: flex; align-items: center; justify-content: flex-end; padding-right: 7px; }
.weather { gap: 17px; margin-right: 31px; font-size: 19px; }
.weather svg { width: 28px; height: 36px; }
.tray { display: flex; }
.tray button { width: 36px; height: 60px; }
.clock { width: 114px; text-align: center; font-size: 17px; line-height: 28px; }
.notes { width: 73px; height: 60px; padding-right: 12px; border-right: 1px solid #777; }
.notes svg { width: 24px; height: 24px; }
```
